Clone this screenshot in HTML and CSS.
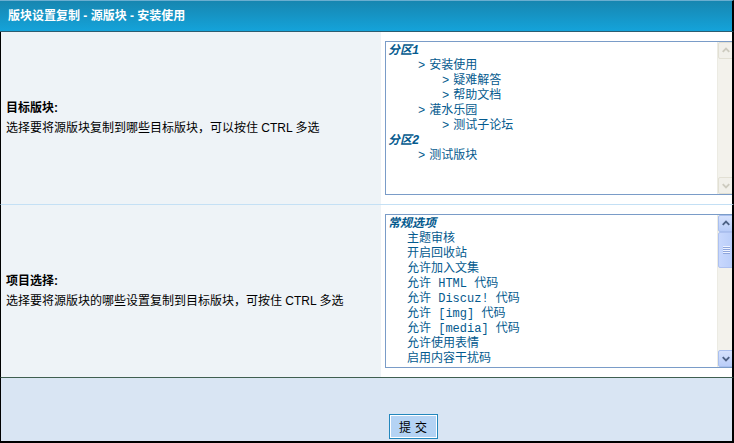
FILE: index.html
```html
<!DOCTYPE html>
<html lang="zh-CN">
<head>
    <meta charset="UTF-8">
    <title>版块设置复制</title>
    <link rel="stylesheet" href="styles.css">
</head>
<body>

    <div class="panel">
        <!-- 标题栏 -->
        <div class="panel-head">版块设置复制 - 源版块 - 安装使用</div>

        <!-- 目标版块 -->
        <div class="form-row row-split">
            <div class="form-label">
                <b>目标版块:</b>
                <span>选择要将源版块复制到哪些目标版块，可以按住 CTRL 多选</span>
            </div>
            <div class="form-field">
                <div class="listbox">
                    <div class="list-items">
                        <div class="list-group">分区1</div>
                        <div class="list-item lv1"><i>&gt;</i>安装使用</div>
                        <div class="list-item lv2"><i>&gt;</i>疑难解答</div>
                        <div class="list-item lv2"><i>&gt;</i>帮助文档</div>
                        <div class="list-item lv1"><i>&gt;</i>灌水乐园</div>
                        <div class="list-item lv2"><i>&gt;</i>测试子论坛</div>
                        <div class="list-group">分区2</div>
                        <div class="list-item lv1"><i>&gt;</i>测试版块</div>
                    </div>
                    <!-- 滚动条（内容未超出，灰色不可用） -->
                    <div class="scrollbar disabled">
                        <div class="scroll-btn">
                            <svg width="15" height="15" viewBox="0 0 15 15"><polyline points="4,9 7.5,5.5 11,9" fill="none" stroke="#cdcbbf" stroke-width="2"/></svg>
                        </div>
                        <div class="scroll-track"></div>
                        <div class="scroll-btn">
                            <svg width="15" height="15" viewBox="0 0 15 15"><polyline points="4,6 7.5,9.5 11,6" fill="none" stroke="#cdcbbf" stroke-width="2"/></svg>
                        </div>
                    </div>
                </div>
            </div>
        </div>

        <!-- 项目选择 -->
        <div class="form-row row-last">
            <div class="form-label">
                <b>项目选择:</b>
                <span>选择要将源版块的哪些设置复制到目标版块，可按住 CTRL 多选</span>
            </div>
            <div class="form-field">
                <div class="listbox">
                    <div class="list-items">
                        <div class="list-group">常规选项</div>
                        <div class="list-item opt">主题审核</div>
                        <div class="list-item opt">开启回收站</div>
                        <div class="list-item opt">允许加入文集</div>
                        <div class="list-item opt">允许 HTML 代码</div>
                        <div class="list-item opt">允许 Discuz! 代码</div>
                        <div class="list-item opt">允许 [img] 代码</div>
                        <div class="list-item opt">允许 [media] 代码</div>
                        <div class="list-item opt">允许使用表情</div>
                        <div class="list-item opt">启用内容干扰码</div>
                    </div>
                    <div class="scrollbar">
                        <div class="scroll-btn">
                            <svg width="15" height="15" viewBox="0 0 15 15"><polyline points="4,9 7.5,5.5 11,9" fill="none" stroke="#4d6185" stroke-width="2"/></svg>
                        </div>
                        <div class="scroll-thumb"><i class="grip"></i></div>
                        <div class="scroll-track"></div>
                        <div class="scroll-btn">
                            <svg width="15" height="15" viewBox="0 0 15 15"><polyline points="4,6 7.5,9.5 11,6" fill="none" stroke="#4d6185" stroke-width="2"/></svg>
                        </div>
                    </div>
                </div>
            </div>
        </div>

        <!-- 提交 -->
        <div class="form-foot">
            <div class="foot-spacer"></div>
            <div class="foot-actions">
                <button class="submit-btn">提交</button>
            </div>
        </div>
    </div>

</body>
</html>
```

FILE: styles.css
```css
/* 基本 */
body {
    margin: 0;
    overflow: hidden;
    font-family: "Liberation Sans", "Noto Sans CJK SC", sans-serif;
    font-size: 12px;
    color: #000;
    background: #fff;
}

.panel {
    width: 734px;
}

/* 标题栏 */
.panel-head {
    height: 30px;
    line-height: 30px;
    padding-left: 8px;
    border-top: 1px solid #6aaed0;
    border-bottom: 1px solid #2c5d70;
    border-right: 2px solid #000;
    background: linear-gradient(#1786b0, #14a3da);
    color: #fff;
    font-weight: bold;
}

/* 表单行 */
.form-row {
    display: flex;
    height: 172px;
    border-left: 1px solid #000;
    border-right: 2px solid #000;
    overflow: hidden;
}
.row-split {
    border-bottom: 1px solid #c4e0f5;
}
.row-last {
    border-bottom: 1px solid #3f5f50;
}

.form-label {
    width: 375px;
    flex-shrink: 0;
    padding-left: 5px;
    display: flex;
    flex-direction: column;
    justify-content: center;
    line-height: 20px;
    background: #eef3f7;
}
.form-label b {
    display: block;
}

.form-field {
    flex: 1;
    padding: 9px 0 9px 4px;
    background: #fff;
}

/* 列表框 */
.listbox {
    width: 350px;
    height: 154px;
    box-sizing: border-box;
    border: 1px solid #7a9cc8;
    display: flex;
    overflow: hidden;
}

.list-items {
    flex: 1;
    padding: 2px 0 0 2px;
    font-family: "Liberation Mono", "Noto Sans CJK SC", monospace;
    font-size: 12px;
    line-height: 15px;
    color: #045a8e;
    overflow: hidden;
}
.list-group,
.list-item {
    white-space: nowrap;
}
.list-group {
    font-weight: bold;
    font-style: italic;
}
.list-item i {
    font-style: normal;
    margin-right: 4px;
}
.list-item.lv1 { padding-left: 30px; }
.list-item.lv2 { padding-left: 54px; }
.list-item.opt { padding-left: 19px; }

/* 滚动条 */
.scrollbar {
    width: 17px;
    flex-shrink: 0;
    display: flex;
    flex-direction: column;
    background: #f3f2ec;
    border-left: 1px solid #ecebe3;
    box-sizing: border-box;
}
.scroll-btn {
    height: 17px;
    box-sizing: border-box;
    border: 1px solid #a9bfee;
    border-radius: 2px;
    background: linear-gradient(#d6e2fd, #b9cdf8);
    display: flex;
    align-items: center;
    justify-content: center;
}
.scroll-track {
    flex: 1;
}
.scroll-thumb {
    height: 36px;
    box-sizing: border-box;
    border: 1px solid #aec1f0;
    border-radius: 2px;
    background: linear-gradient(90deg, #c8d8fd, #b9cdf9);
    display: flex;
    align-items: center;
    justify-content: center;
}
.grip {
    width: 7px;
    height: 8px;
    background: repeating-linear-gradient(#eef3ff 0 1px, #8fa6dc 1px 2px);
}

/* 不可用状态 */
.scrollbar.disabled .scroll-btn {
    border-color: #e2e0d4;
    background: #f1f0ea;
}

/* 底部 */
.form-foot {
    display: flex;
    height: 63px;
    border-left: 1px solid #000;
    border-right: 2px solid #000;
    border-bottom: 2px solid #000;
    background: #d9e5f3;
}
.foot-spacer {
    width: 380px;
}
.foot-actions {
    padding: 36px 0 0 8px;
}
.submit-btn {
    width: 49px;
    height: 25px;
    padding: 0 0 0 3px;
    border: 1px solid #2387bd;
    box-shadow: inset 0 0 0 1px #fff;
    background: #b4d3f4;
    font-family: "Noto Sans CJK SC", sans-serif;
    font-size: 12px;
    letter-spacing: 4px;
    color: #000;
    cursor: pointer;
}
```
